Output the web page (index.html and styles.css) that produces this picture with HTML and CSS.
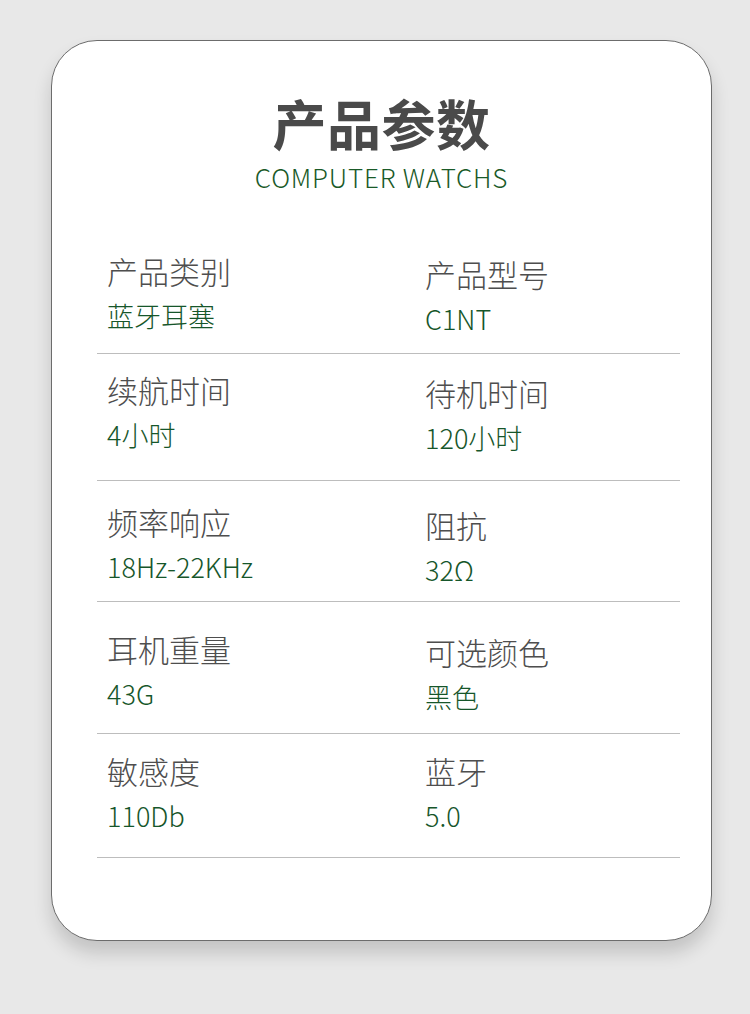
FILE: index.html
```html
<!DOCTYPE html>
<html lang="zh-CN">
<head>
<meta charset="utf-8">
<title>产品参数</title>
<link rel="stylesheet" href="styles.css">
</head>
<body>
<div class="card">
  <header class="head">
    <h1 class="title">产品参数</h1>
    <p class="subtitle">COMPUTER WATCHS</p>
  </header>
  <div class="specs">
    <div class="row">
      <div class="cell"><div class="label">产品类别</div><div class="value">蓝牙耳塞</div></div>
      <div class="cell shift"><div class="label">产品型号</div><div class="value">C1NT</div></div>
    </div>
    <div class="row">
      <div class="cell"><div class="label">续航时间</div><div class="value">4小时</div></div>
      <div class="cell shift"><div class="label">待机时间</div><div class="value">120小时</div></div>
    </div>
    <div class="row">
      <div class="cell"><div class="label">频率响应</div><div class="value">18Hz-22KHz</div></div>
      <div class="cell shift"><div class="label">阻抗</div><div class="value">32Ω</div></div>
    </div>
    <div class="row">
      <div class="cell"><div class="label">耳机重量</div><div class="value">43G</div></div>
      <div class="cell shift"><div class="label">可选颜色</div><div class="value">黑色</div></div>
    </div>
    <div class="row">
      <div class="cell"><div class="label">敏感度</div><div class="value">110Db</div></div>
      <div class="cell"><div class="label">蓝牙</div><div class="value">5.0</div></div>
    </div>
  </div>
</div>
</body>
</html>
```

FILE: styles.css
```css
* { box-sizing: border-box; }

html, body {
  margin: 0;
  padding: 0;
}

body {
  background: #e8e8e8;
  font-family: "Noto Sans CJK SC", "Noto Sans", sans-serif;
  width: 750px;
  height: 1014px;
  overflow: hidden;
}

.card {
  margin: 40px 0 0 51px;
  width: 661px;
  height: 901px;
  background: #ffffff;
  border: 1px solid #6c6c6c;
  border-radius: 46px;
  box-shadow: 0 12px 18px rgba(0, 0, 0, 0.16);
  padding-top: 55px;
}

.head {
  text-align: center;
}

.title {
  margin: 0;
  font-size: 54px;
  line-height: 1;
  font-weight: 700;
  color: #4a4a4a;
  letter-spacing: 0.5px;
}

.subtitle {
  margin: 11px 0 0;
  font-size: 26px;
  line-height: 1.2;
  font-weight: 300;
  color: #1a5a28;
  letter-spacing: 0.8px;
}

.specs {
  margin: 40px 31px 0 45px;
}

.row {
  display: grid;
  grid-template-columns: 328px 1fr;
  border-bottom: 1px solid #bdbdbd;
}

.row:nth-child(1) { padding: 20px 0 18px; }
.row:nth-child(2) { padding: 17px 0 26px; }
.row:nth-child(3) { padding: 22px 0 15px; }
.row:nth-child(4) { padding: 28px 0 20px; }
.row:nth-child(5) { padding: 18px 0 25px; }

.cell {
  padding-left: 10px;
  display: flex;
  flex-direction: column;
  gap: 11px;
}

.cell + .cell {
  padding-left: 0;
}

.cell.shift {
  padding-top: 3px;
}

.label {
  font-size: 31px;
  line-height: 37px;
  font-weight: 300;
  color: #4e4e4e;
}

.value {
  font-size: 27px;
  line-height: 32px;
  font-weight: 300;
  color: #16562a;
}
```
